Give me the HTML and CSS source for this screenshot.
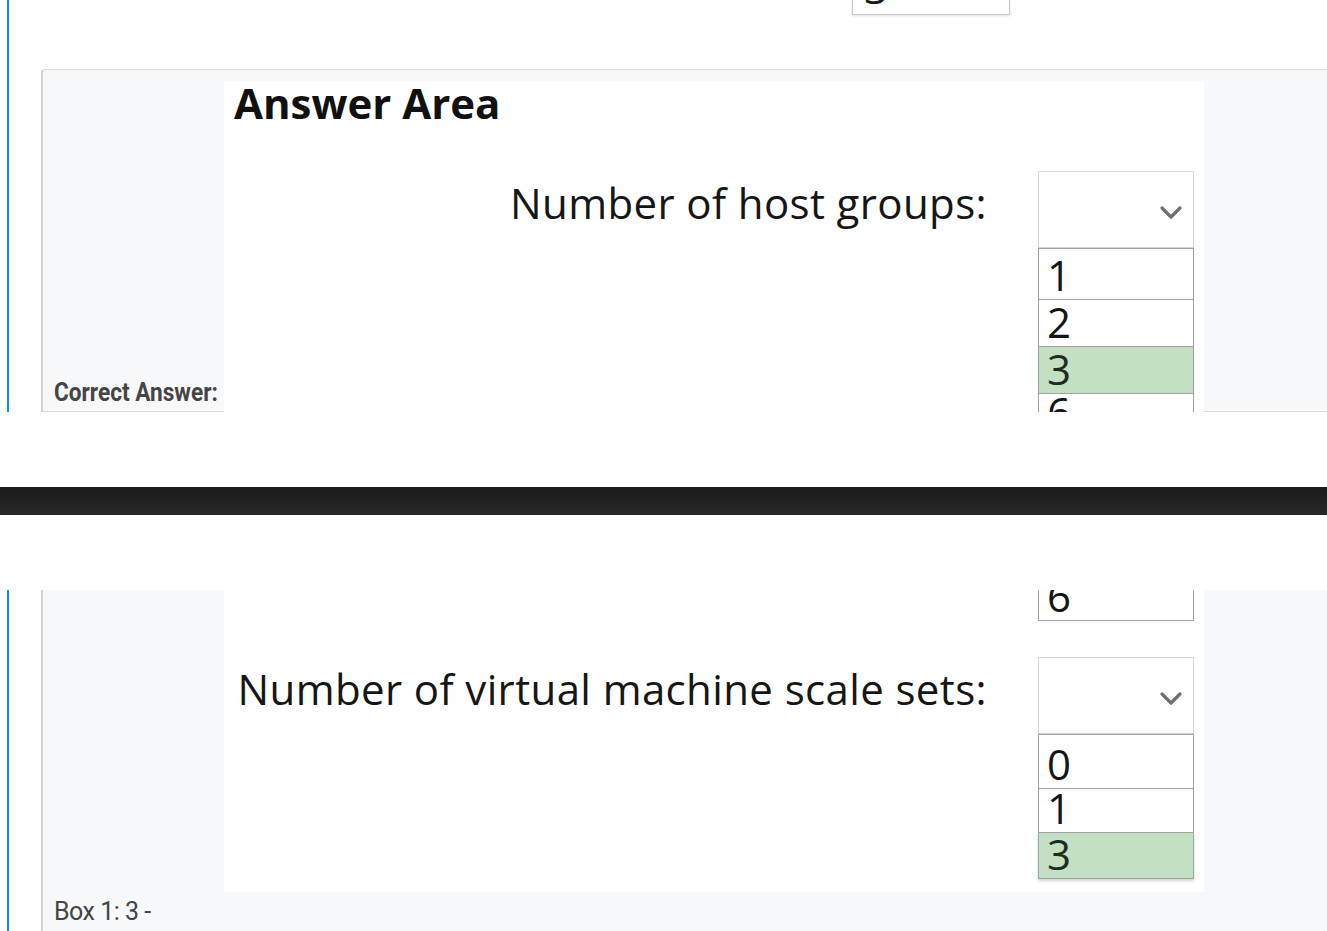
FILE: index.html
```html
<!DOCTYPE html>
<html lang="en">
<head>
<meta charset="utf-8">
<title>Answer Area</title>
<link rel="stylesheet" href="styles.css">
</head>
<body>
<div class="frag frag-top">
  <div class="col">
    <div class="prev-select"><div class="prev-row">3</div></div>
    <div class="box box-top">
      <div class="ca"><span>Correct Answer:</span></div>
      <div class="shot shot-top">
        <div class="aa-title">Answer Area</div>
        <div class="q q1">
          <div class="q-label">Number of host groups:</div>
          <div class="dd">
            <div class="dd-head">
              <svg class="chev" width="24" height="15" viewBox="0 0 24 15"><polyline points="3,3 12,12 21,3" fill="none" stroke="#6f6f6f" stroke-width="3.2" stroke-linecap="round" stroke-linejoin="round"/></svg>
            </div>
            <div class="opt h51">1</div>
            <div class="opt h47">2</div>
            <div class="opt h47 sel">3</div>
            <div class="opt h44 last">6</div>
          </div>
        </div>
      </div>
    </div>
  </div>
</div>
<div class="gap"></div>
<div class="darkbar"></div>
<div class="gap"></div>
<div class="frag frag-bottom">
  <div class="col">
    <div class="box box-bottom">
      <div class="shot shot-bottom">
        <div class="q">
          <div class="dd dd-cont">
            <div class="clip"><div class="opt last">6</div></div>
          </div>
        </div>
        <div class="q q2">
          <div class="q-label">Number of virtual machine scale sets:</div>
          <div class="dd">
            <div class="dd-head">
              <svg class="chev" width="24" height="15" viewBox="0 0 24 15"><polyline points="3,3 12,12 21,3" fill="none" stroke="#6f6f6f" stroke-width="3.2" stroke-linecap="round" stroke-linejoin="round"/></svg>
            </div>
            <div class="opt h54">0</div>
            <div class="opt h44">1</div>
            <div class="opt h47 sel last shadow">3</div>
          </div>
        </div>
      </div>
      <p class="box-text">Box 1: 3 -</p>
    </div>
  </div>
</div>
</body>
</html>
```
FILE: styles.css
```css
* { box-sizing: border-box; }
html, body { margin: 0; padding: 0; background: #fff; }
body {
  width: 1327px;
  height: 931px;
  overflow: hidden;
  font-family: "Open Sans", "Noto Sans", sans-serif;
}

.frag { position: relative; overflow: hidden; }
.frag-top { height: 412px; }
.frag-bottom { height: 341px; }

.col {
  margin-left: 7px;
  height: 100%;
  border-left: 2px solid #0a8fe6;
}

.prev-select {
  margin-left: 843px;
  width: 158px;
  height: 15px;
  overflow: hidden;
  background: #fff;
  border: 1px solid #c9c9c9;
  border-top: 0;
  box-shadow: 0 1px 2px rgba(0, 0, 0, 0.12);
}
.prev-row {
  margin-top: -32px;
  padding-left: 11px;
  font-size: 42px;
  line-height: 40px;
  color: #1a1a1a;
}

.box {
  display: flex;
  margin-left: 32px;
  background: #f7f8fa;
  border-left: 2px solid #d2d2d2;
}
.box-top {
  margin-top: 54px;
  height: 343px;
  padding: 11px 0 0 11px;
  align-items: flex-start;
  border-top: 1px solid #dadada;
  border-bottom: 1px solid #dadada;
  border-top-left-radius: 4px;
}
.box-bottom {
  height: 100%;
  flex-direction: column;
  padding-left: 11px;
}

.ca {
  flex: none;
  width: 170px;
  align-self: flex-end;
  margin-bottom: 6px;
  font-family: Roboto, "Liberation Sans", sans-serif;
  font-weight: 700;
  font-size: 26px;
  line-height: 26px;
  color: #454545;
  white-space: nowrap;
}
.ca span {
  display: inline-block;
  transform: scaleX(0.87);
  transform-origin: 0 0;
}

.shot {
  flex: none;
  width: 980px;
  background: #fff;
}
.shot-top { height: 520px; }
.shot-bottom { height: 302px; margin-left: 170px; }

.aa-title {
  width: 281px;
  height: 49px;
  padding: 2px 0 0 10px;
  font-weight: 700;
  font-size: 42px;
  line-height: 40px;
  color: #111;
}

.q { display: flex; align-items: flex-start; }
.q1 { margin-top: 41px; }
.q2 { margin-top: 36px; }
.q-label {
  flex: 1;
  text-align: right;
  white-space: nowrap;
  font-size: 42px;
  line-height: 57px;
  letter-spacing: 0.38px;
  padding-top: 3px;
  color: #161616;
}

.dd {
  flex: none;
  width: 156px;
  margin-left: 51px;
  margin-right: 10px;
}
.dd-cont { margin-left: auto; }
.dd-head {
  display: flex;
  justify-content: flex-end;
  height: 77px;
  padding: 33px 10px 0 0;
  background: #fff;
  border: 1px solid #d6d6d6;
}
.chev { display: block; }

.opt {
  display: flex;
  align-items: flex-end;
  padding: 0 0 4px 8px;
  font-size: 42px;
  line-height: 40px;
  color: #151515;
  background: #fff;
  border: 1px solid #a3a3a3;
  border-bottom: 0;
}
.opt.last { border-bottom: 1px solid #a3a3a3; }
.sel { background: #c3e0c3; color: #1d2e1d; }
.shadow { box-shadow: 0 2px 3px rgba(0, 0, 0, 0.18); }
.h44 { height: 44px; }
.h47 { height: 47px; }
.h51 { height: 51px; }
.h54 { height: 54px; }

.clip { height: 31px; overflow: hidden; }
.clip .opt { height: 44px; margin-top: -13px; }

.box-text {
  margin: 7px 0 0;
  font-family: Roboto, "Liberation Sans", sans-serif;
  font-size: 25px;
  line-height: 25px;
  letter-spacing: -0.5px;
  color: #444;
}

.gap { height: 75px; }
.darkbar {
  height: 28px;
  background: linear-gradient(#1b1b1b, #282828);
}
```
